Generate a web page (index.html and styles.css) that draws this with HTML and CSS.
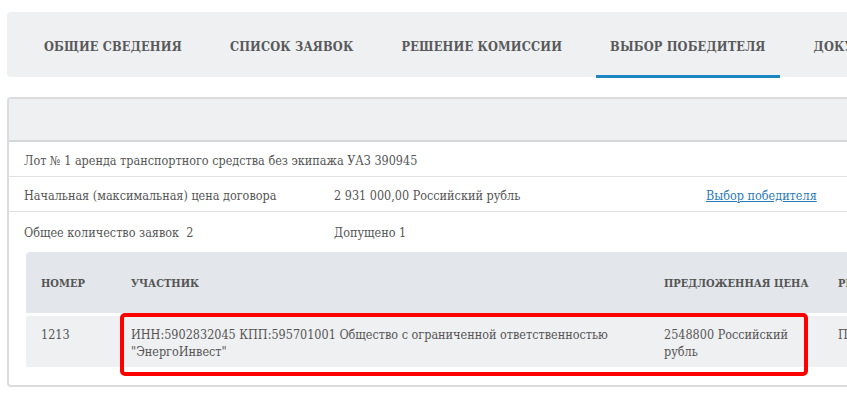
FILE: index.html
```html
<!DOCTYPE html>
<html lang="ru">
<head>
  <meta charset="UTF-8">
  <title>Выбор победителя</title>
  <link rel="stylesheet" href="styles.css">
</head>
<body>
  <div class="tabs">
    <div class="tab">Общие сведения</div>
    <div class="tab">Список заявок</div>
    <div class="tab">Решение комиссии</div>
    <div class="tab active">Выбор победителя</div>
    <div class="tab">Документы</div>
  </div>

  <div class="panel">
    <div class="panel-header"></div>
    <div class="info-row">
      <span>Лот № 1 аренда транспортного средства без экипажа УАЗ 390945</span>
    </div>
    <div class="info-row">
      <span class="info-label">Начальная (максимальная) цена договора</span>
      <span class="info-value">2 931 000,00 Российский рубль</span>
      <a href="#" class="info-link">Выбор победителя</a>
    </div>
    <div class="info-row tall">
      <span class="info-label">Общее количество заявок&nbsp; 2</span>
      <span class="info-value">Допущено 1</span>
    </div>

    <div class="bids">
      <div class="bids-head">
        <div class="cell">Номер</div>
        <div class="cell">Участник</div>
        <div class="cell">Предложенная цена</div>
        <div class="cell">Результат</div>
      </div>
      <div class="bids-row">
        <div class="cell">1213</div>
        <div class="cell">ИНН:5902832045 КПП:595701001 Общество с ограниченной ответственностью "ЭнергоИнвест"</div>
        <div class="cell">2548800 Российский рубль</div>
        <div class="cell">Победитель</div>
      </div>
      <div class="highlight"></div>
    </div>
  </div>
</body>
</html>
```

FILE: styles.css
```css
* {
  margin: 0;
  padding: 0;
  box-sizing: border-box;
}

body {
  width: 847px;
  height: 402px;
  overflow: hidden;
  background: #ffffff;
  font-family: 'DejaVu Serif', 'Liberation Serif', serif;
  color: #555555;
}

.tabs {
  display: flex;
  margin: 12px 0 0 7px;
  padding-left: 23px;
  height: 65px;
  background: #eff0f2;
  border-radius: 4px 0 0 4px;
  white-space: nowrap;
}

.tab {
  display: flex;
  align-items: center;
  padding: 5px 14px 0;
  margin-right: 20px;
  font-size: 12.7px;
  font-weight: bold;
  font-stretch: condensed;
  letter-spacing: 0.15px;
  text-transform: uppercase;
  color: #58595b;
  border-bottom: 3px solid transparent;
  height: 66px;
}

.tab.active {
  border-bottom-color: #1a87c2;
}

.panel {
  margin: 20px 0 0 7px;
  height: 290px;
  border: 2px solid #dcdcdc;
  border-right: none;
  border-radius: 4px 0 0 4px;
  font-size: 12.5px;
  font-stretch: condensed;
}

.panel-header {
  height: 43px;
  background: #eff0f2;
  border-bottom: 2px solid #d6d7d9;
}

.info-row {
  display: flex;
  align-items: center;
  height: 35px;
  padding: 2px 15px 0;
  border-bottom: 1px solid #e2e2e2;
}

.info-row.tall {
  height: 38px;
  border-bottom: none;
}

.info-label {
  width: 310px;
}

.info-value {
  width: 372px;
}

.info-link {
  color: #2b7bb9;
  text-decoration: underline;
}

.bids {
  position: relative;
  margin: 2px 0 0 17px;
}

.bids-head,
.bids-row {
  display: grid;
  grid-template-columns: 90px 533px 174px 200px;
}

.bids-head {
  height: 61px;
  padding-top: 2px;
  align-items: center;
  background: #e3e6ea;
  border-radius: 4px 0 0 0;
  font-size: 11px;
  font-weight: bold;
  text-transform: uppercase;
}

.bids-row {
  margin-top: 3px;
  height: 51px;
  padding-top: 10px;
  background: #eff0f2;
  line-height: 17px;
}

.cell {
  padding: 0 15px;
}

.bids-head .cell {
  white-space: nowrap;
}

.highlight {
  position: absolute;
  left: 94px;
  top: 61px;
  width: 688px;
  height: 63px;
  border: 4px solid #ff0000;
  border-radius: 5px;
}
```
